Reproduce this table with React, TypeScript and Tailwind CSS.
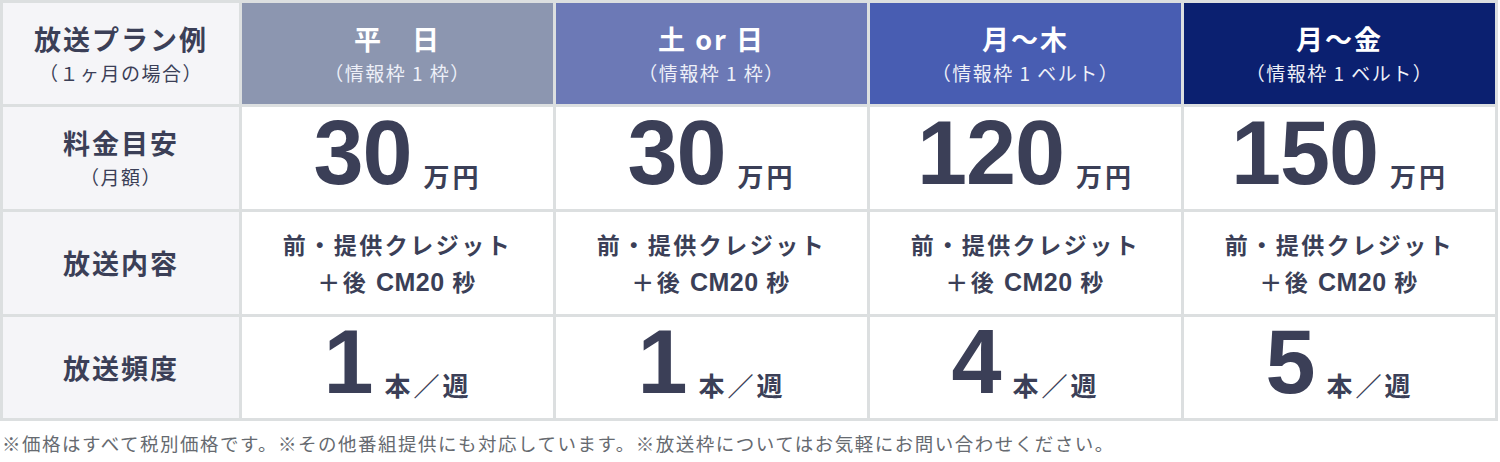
import React from 'react';

const font = { fontFamily: '"Noto Sans CJK JP", "Noto Sans", sans-serif' };
const latin = { fontFamily: '"Liberation Sans", Arial, sans-serif' };

const plans = [
  { title: '平　日', sub: '（情報枠 1 枠）', bg: 'bg-[#8c96b0]', price: '30', freq: '1' },
  { title: '土 or 日', sub: '（情報枠 1 枠）', bg: 'bg-[#6c79b6]', price: '30', freq: '1' },
  { title: '月〜木', sub: '（情報枠 1 ベルト）', bg: 'bg-[#485db2]', price: '120', freq: '4' },
  { title: '月〜金', sub: '（情報枠 1 ベルト）', bg: 'bg-[#0b2070]', price: '150', freq: '5' },
];

function Label({ title, sub }: { title: string; sub?: string }) {
  return (
    <div className="bg-[#f5f5f8] flex flex-col items-center justify-center text-[#3b3f57]">
      <div className="text-[27px] font-bold leading-[34px] tracking-[2px]">{title}</div>
      {sub && <div className="text-[19px] leading-[26px] mt-[4px] tracking-[1.5px]">{sub}</div>}
    </div>
  );
}

function Big({ value, unit }: { value: string; unit: string }) {
  return (
    <div className="bg-white flex items-end justify-center pb-[19px] text-[#3b3f57]">
      <span className="text-[90px] font-bold leading-[74px] tracking-[-1px]" style={latin}>
        {value}
      </span>
      <span className="text-[26px] font-bold leading-[28px] ml-[12px] tracking-[3px]">{unit}</span>
    </div>
  );
}

export default function App() {
  return (
    <div className="w-[1500px] h-[462px] bg-white" style={font}>
      <div className="w-[1498px] grid grid-cols-[236px_repeat(4,1fr)] grid-rows-[101px_102px_102px_101px] gap-[3px] p-[3px] bg-[#dcdfe0]">
        <Label title="放送プラン例" sub="（１ヶ月の場合）" />
        {plans.map((p) => (
          <div key={p.title} className={`${p.bg} flex flex-col items-center justify-center text-white`}>
            <div className="text-[27px] font-bold leading-[34px] tracking-[2px]">{p.title}</div>
            <div className="text-[19px] leading-[26px] mt-[4px] tracking-[1.5px] text-[#eef0f8]">{p.sub}</div>
          </div>
        ))}

        <Label title="料金目安" sub="（月額）" />
        {plans.map((p) => (
          <Big key={p.title} value={p.price} unit="万円" />
        ))}

        <Label title="放送内容" />
        {plans.map((p) => (
          <div key={p.title} className="bg-white flex flex-col items-center justify-center text-[#3b3f57] text-[23px] font-bold leading-[37px] tracking-[2.5px]">
            <div>前・提供クレジット</div>
            <div>
              ＋後 <span className="text-[25px] tracking-[0.5px]" style={latin}>CM20</span> 秒
            </div>
          </div>
        ))}

        <Label title="放送頻度" />
        {plans.map((p) => (
          <Big key={p.title} value={p.freq} unit="本／週" />
        ))}
      </div>
      <p className="mt-[9px] text-[18.5px] leading-[26px] text-[#666a70] tracking-[1.5px] pl-[2px]">
        ※価格はすべて税別価格です。※その他番組提供にも対応しています。※放送枠についてはお気軽にお問い合わせください。
      </p>
    </div>
  );
}
